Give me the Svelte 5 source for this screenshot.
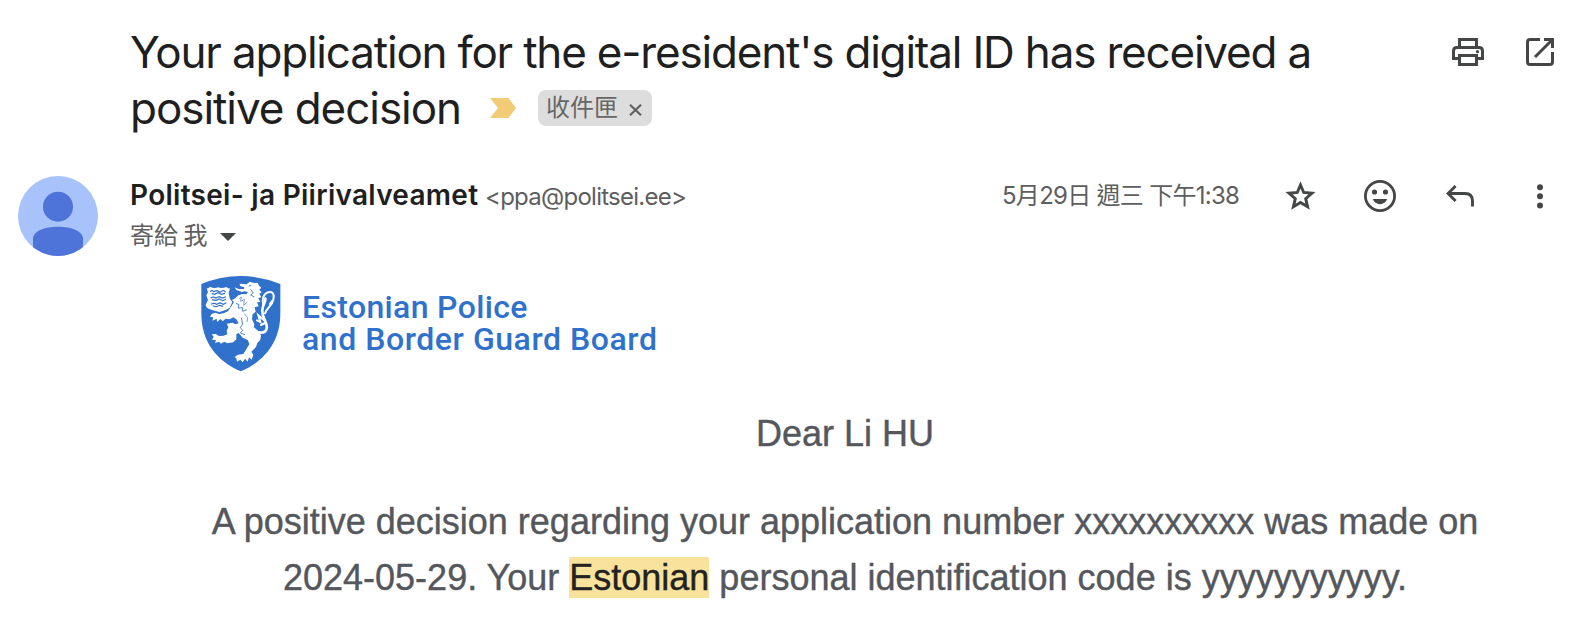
<script>
  const sender = 'Politsei- ja Piirivalveamet';
  const email = '<ppa@politsei.ee>';
</script>

<main class="mail">
  <header class="subject">
    <h1>
      <span class="line first">Your application for the e-resident's digital ID has received a</span>
      <span class="row">
        <span class="line second">positive decision</span>
        <svg class="marker" width="26" height="20" viewBox="0 0 26 20"><path d="M0 0H18.5L26 10L18.5 20H0L8 10Z" fill="#f2cb76" /></svg>
        <span class="chip"><span class="label">收件匣</span><svg width="13" height="12" viewBox="0 0 13 12"><path d="M1 .8 12 11.2M12 .8 1 11.2" stroke="#606060" stroke-width="2.2" /></svg></span>
      </span>
    </h1>
    <div class="tools">
      <svg width="32" height="28" viewBox="0 0 32 28" fill="none" stroke="#444746" stroke-width="3">
        <path d="M7.5 9V1.5H24.5V9" />
        <path d="M7.5 20.5H1.5V13Q1.5 9.5 5 9.5H27Q30.500 9.500 30.500 13V20.500H24.500" />
        <path d="M7.500 17.500H24.500V26.500H7.500Z" />
        <circle cx="25.500" cy="13.700" r="1.600" fill="#444746" stroke="none" />
      </svg>
      <svg width="28" height="28" viewBox="0 0 28 28" fill="none" stroke="#444746" stroke-width="3">
        <path d="M14 1.500H4Q1.500 1.500 1.500 4V24Q1.500 26.500 4 26.500H24Q26.500 26.500 26.500 24V14" />
        <path d="M18 1.500H26.500V10M25.500 2.500 9 19" />
      </svg>
    </div>
  </header>

  <section class="sender">
    <svg class="avatar" width="80" height="80" viewBox="0 0 80 80">
      <clipPath id="round"><circle cx="40" cy="40" r="40" /></clipPath>
      <g clip-path="url(#round)">
        <rect width="80" height="80" fill="#a8c2fb" />
        <circle cx="40" cy="30.700" r="15" fill="#4f74d9" />
        <path d="M15 80V63C15 55 26 50.700 40 50.700S65 55 65 63V80Z" fill="#4f74d9" />
      </g>
    </svg>
    <div class="who">
      <div class="names"><strong>{sender}</strong><span class="email">{email}</span></div>
      <div class="to"><span>寄給 我</span><svg width="16" height="8" viewBox="0 0 16 8"><path d="M0 0H16L8 8Z" fill="#444746" /></svg></div>
    </div>
    <div class="meta">
      <span class="date">5月29日 週三 下午1:38</span>
      <svg class="star" width="31" height="30" viewBox="0 0 31 30"><path d="M15.500 3.900 18.700 11.500 27 12.200 20.700 17.700 22.600 25.800 15.500 21.500 8.400 25.800 10.300 17.700 4 12.200 12.300 11.500Z" fill="none" stroke="#444746" stroke-width="2.900" /></svg>
      <svg class="smile" width="32" height="32" viewBox="0 0 32 32">
        <circle cx="16" cy="16" r="14.600" fill="none" stroke="#444746" stroke-width="2.800" />
        <circle cx="10.500" cy="12" r="2.600" fill="#444746" /><circle cx="21.500" cy="12" r="2.600" fill="#444746" />
        <path d="M8.800 19H23.200C22 22.300 19.200 24.200 16 24.200S10 22.300 8.800 19Z" fill="#444746" />
      </svg>
      <svg class="reply" width="28" height="22" viewBox="0 0 28 22" fill="none" stroke="#444746" stroke-width="2.900"><path d="M9.600 1 2 8.500 9.600 16M2 8.500H19Q26.500 8.500 26.500 16V21.500" /></svg>
      <svg class="dots" width="6" height="25" viewBox="0 0 6 25" fill="#444746"><circle cx="3" cy="3.200" r="3" /><circle cx="3" cy="12.300" r="3" /><circle cx="3" cy="21.400" r="3" /></svg>
    </div>
  </section>

  <section class="brand">
    <svg class="shield" width="110" height="115" viewBox="0 0 330 345">
      <path d="M34 57Q92 33 152 33T271 57V145C271 230 225 288 152 319C79 288 34 230 34 145Z" fill="#3071cb" />
      <g fill="#fff">
        <path d="M50 70Q55 71 60 65Q72 72 84 67Q96 72 109 66Q114 71 120 70L116 84L119 100L127 111L119 128L109 134L88 141L64 134Q50 132 47 120L54 105L49 91L54 82Z" />
        <path d="M149 56 169 58 180 50 192 54 203 53 207 62 214 68 208 74 215 82 208 86 214 97 205 99 211 111 201 112 206 124 194 127 197 140 188 148 186 163 193 178 191 190 205 199 213 211 211 224 202 234 198 246 184 260 190 269 185 284 177 277 173 290 165 281 158 292 151 284 141 290 139 280 134 276 144 269 160 267 167 256 178 238 174 226 158 218 146 204 139 208 139 223 130 232 112 235 103 230 93 236 87 230 75 234 78 225 66 224 71 215 65 208 77 207 87 213 101 212 112 208 110 198 115 186 110 176 128 173 136 178 146 175 139 163 130 157 119 163 107 161 98 169 92 162 81 171 80 161 67 167 70 157 60 155 65 147 75 143 88 147 101 145 114 139 124 124 132 111 126 105 136 100 145 91 158 87 169 88 174 81 163 79 156 81 139 75 134 67 146 72 162 72 163 67 150 63Z" />
      </g>
      <g fill="none" stroke="#fff" stroke-width="8" stroke-linecap="round">
        <path d="M192 192C203 207 226 207 230 190C234 171 215 161 217 135C219 115 228 110 226 101" />
        <path d="M220 121C215 103 220 87 234 82C250 78 254 90 250 104C246 122 232 127 225 145" stroke-width="6" />
        <path d="M222 166 205 151 211 171 201 166M225 174 213 180M240 117 246 108" stroke-width="6" />
      </g>
      <g fill="none" stroke="#3071cb" stroke-width="3.500">
        <path d="M61 80Q65 74 71 80L81 77 91 81 100 76 107 81M65 85 74 88 84 83 94 88 105 85M62 99Q70 94 77 99L88 95 98 99 108 95M66 104 78 106 88 102 98 107 108 103M63 118Q73 112 80 118L90 114 100 118 109 113M68 123 79 125 88 121 99 124" />
        <path d="M176 63 184 61M182 73 190 84 182 90 193 96M138 115 147 119 144 129 157 128 158 139 171 134M154 158 158 177 151 188 158 196 151 204 165 209" stroke-width="2.500" />
        <path d="M148 101 154 96 152 109 163 103 161 121 172 111M163 146 173 158 171 171" stroke-width="2" />
      </g>
    </svg>
    <div class="brandname"><span class="b1">Estonian Police</span><span class="b2">and Border Guard Board</span></div>
  </section>

  <article>
    <p class="hello">Dear Li HU</p>
    <p>A positive decision regarding your application number xxxxxxxxxx was made on<br />2024-05-29. Your <mark>Estonian</mark> personal identification code is yyyyyyyyyyy.</p>
  </article>
</main>

<style>
  :global(body) { background: #fff; }
  .mail { box-sizing: border-box; width: 1588px; height: 632px; overflow: hidden; background: #fff; font-family: Inter, "Noto Sans CJK TC", sans-serif; color: #5e5e5e; }
  svg { display: block; flex: none; }
  span, strong { white-space: nowrap; }
  .subject { display: flex; justify-content: space-between; height: 153px; box-sizing: border-box; padding: 24px 34px 0 130px; }
  h1 { margin: 0; font-size: 44px; font-weight: 400; line-height: 56px; color: #1f1f1f; }
  .line { display: block; }
  .first { letter-spacing: -1.19px; }
  .second { letter-spacing: -1.05px; width: 360px; }
  .row { display: flex; align-items: center; height: 56px; }
  .marker { margin: 0 22px 0 0; }
  .chip { display: flex; align-items: center; gap: 13px; box-sizing: border-box; width: 114px; height: 36px; margin-top: 0; padding-left: 8px; border-radius: 8px; background: #ddd; color: #666; font: 24px/36px "Noto Sans CJK TC", sans-serif; }
  .chip .label { width: 72px; height: 36px; margin-right: -2px; line-height: 32px; }
  .chip svg { margin-top: 3px; }
  .tools { display: flex; gap: 42px; padding-top: 14px; }
  .sender { display: flex; height: 112px; padding-left: 18px; }
  .avatar { margin-top: 23px; }
  .who { flex: 1; margin-left: 32px; padding-top: 23px; }
  .names { display: flex; align-items: baseline; height: 40px; line-height: 38px; }
  strong { width: 355px; font-size: 28px; font-weight: 600; color: #1f1f1f; letter-spacing: 0.28px; }
  .email { font-size: 24px; letter-spacing: -0.74px; }
  .to { display: flex; align-items: center; height: 40px; font: 24px/35px "Noto Sans CJK TC", sans-serif; }
  .to span { width: 90px; height: 40px; }
  .to svg { margin-top: 2px; }
  .meta { display: flex; align-items: center; height: 40px; padding: 23px 45px 0 0; }
  .date { width: 283px; height: 40px; font-size: 24px; line-height: 39px; letter-spacing: -0.72px; }
  .star { margin-right: 48px; }
  .smile { margin-right: 50px; }
  .reply { margin-right: 63px; }
  .brand { display: flex; height: 115px; padding-left: 190px; }
  .brandname { display: flex; flex-direction: column; padding: 26px 0 0 2px; font-size: 32px; line-height: 32px; font-weight: 500; color: #3071cb; font-family: Roboto, sans-serif; }
  .b1 { letter-spacing: 0.35px; }
  .b2 { letter-spacing: 0.55px; }
  article { width: 1290px; margin-left: 200px; padding-top: 26px; text-align: center; font: 36px/56px "Liberation Sans", Arial, sans-serif; color: #54575c; -webkit-text-stroke: 0.4px currentColor; }
  p { margin: 0; white-space: nowrap; }
  .hello { margin-bottom: 32px; }
  mark { background: #f9e29c; color: #222; }
</style>
